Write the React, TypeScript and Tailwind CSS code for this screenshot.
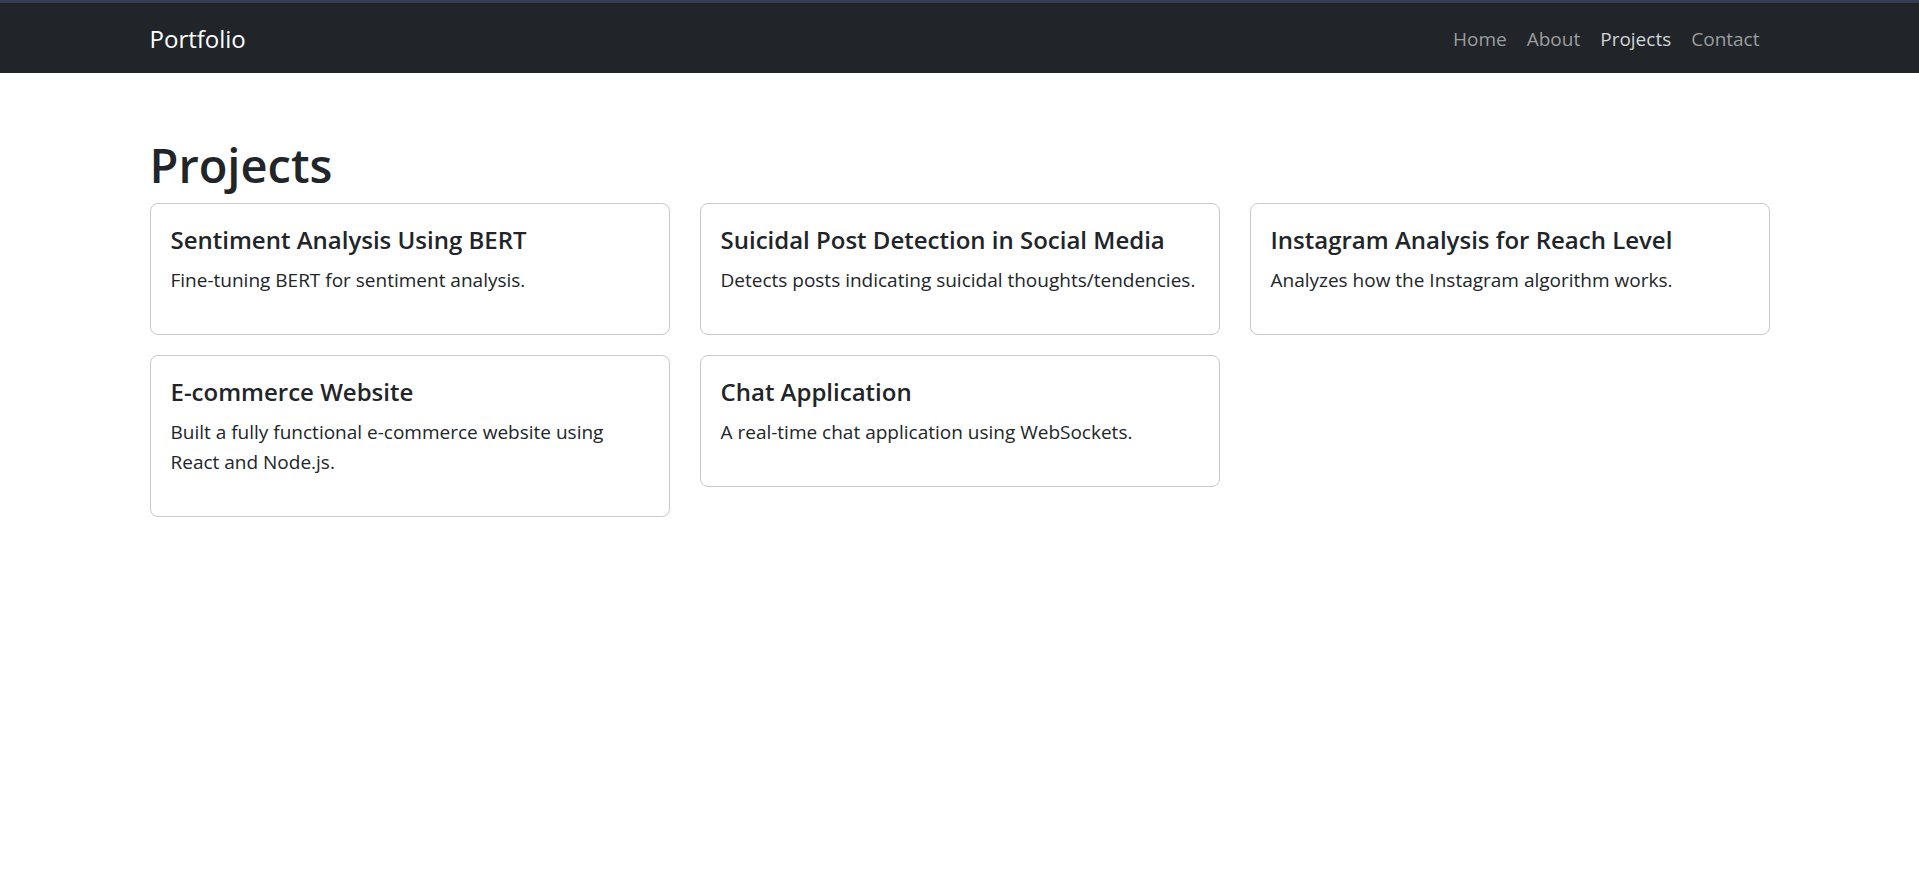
const links = ["Home", "About", "Projects", "Contact"];

const projects = [
  { title: "Sentiment Analysis Using BERT", text: "Fine-tuning BERT for sentiment analysis." },
  { title: "Suicidal Post Detection in Social Media", text: "Detects posts indicating suicidal thoughts/tendencies." },
  { title: "Instagram Analysis for Reach Level", text: "Analyzes how the Instagram algorithm works." },
  { title: "E-commerce Website", text: "Built a fully functional e-commerce website using React and Node.js." },
  { title: "Chat Application", text: "A real-time chat application using WebSockets." },
];

function Navbar() {
  return (
    <header className="border-t-3 border-[#343d51] bg-[#212529] pt-[11px] pb-[9px]">
      <nav className="mx-auto flex max-w-[1644px] items-center justify-between px-3">
        <a href="#home" className="text-[24px] leading-[38px] text-white">Portfolio</a>
        <ul className="flex">
          {links.map((label) => (
            <li key={label}>
              <a
                href={`#${label.toLowerCase()}`}
                aria-current={label === "Projects" ? "page" : undefined}
                className={`block px-[10px] py-[10px] text-[19px] leading-[30px] ${label === "Projects" ? "text-[#d2d3d4]" : "text-[#9b9d9e]"}`}
              >
                {label}
              </a>
            </li>
          ))}
        </ul>
      </nav>
    </header>
  );
}

export default function App() {
  return (
    <div className="min-h-screen bg-white font-['Open_Sans','Noto_Sans',sans-serif] text-[#212529]">
      <Navbar />
      <main className="mx-auto max-w-[1644px] px-3 pt-[60px]">
        <h1 className="mb-[6px] text-[47px] leading-[64px] font-semibold">Projects</h1>
        <div className="grid grid-cols-3 items-start gap-x-[30px] gap-y-5">
          {projects.map(({ title, text }) => (
            <article key={title} className="rounded-lg border border-[#c8c9ca] px-5 pt-[21px] pb-[19px]">
              <h2 className="mb-[10px] text-[24px] leading-[30px] font-semibold">{title}</h2>
              <p className="mb-5 text-[19px] leading-[30px]">{text}</p>
            </article>
          ))}
        </div>
      </main>
    </div>
  );
}
